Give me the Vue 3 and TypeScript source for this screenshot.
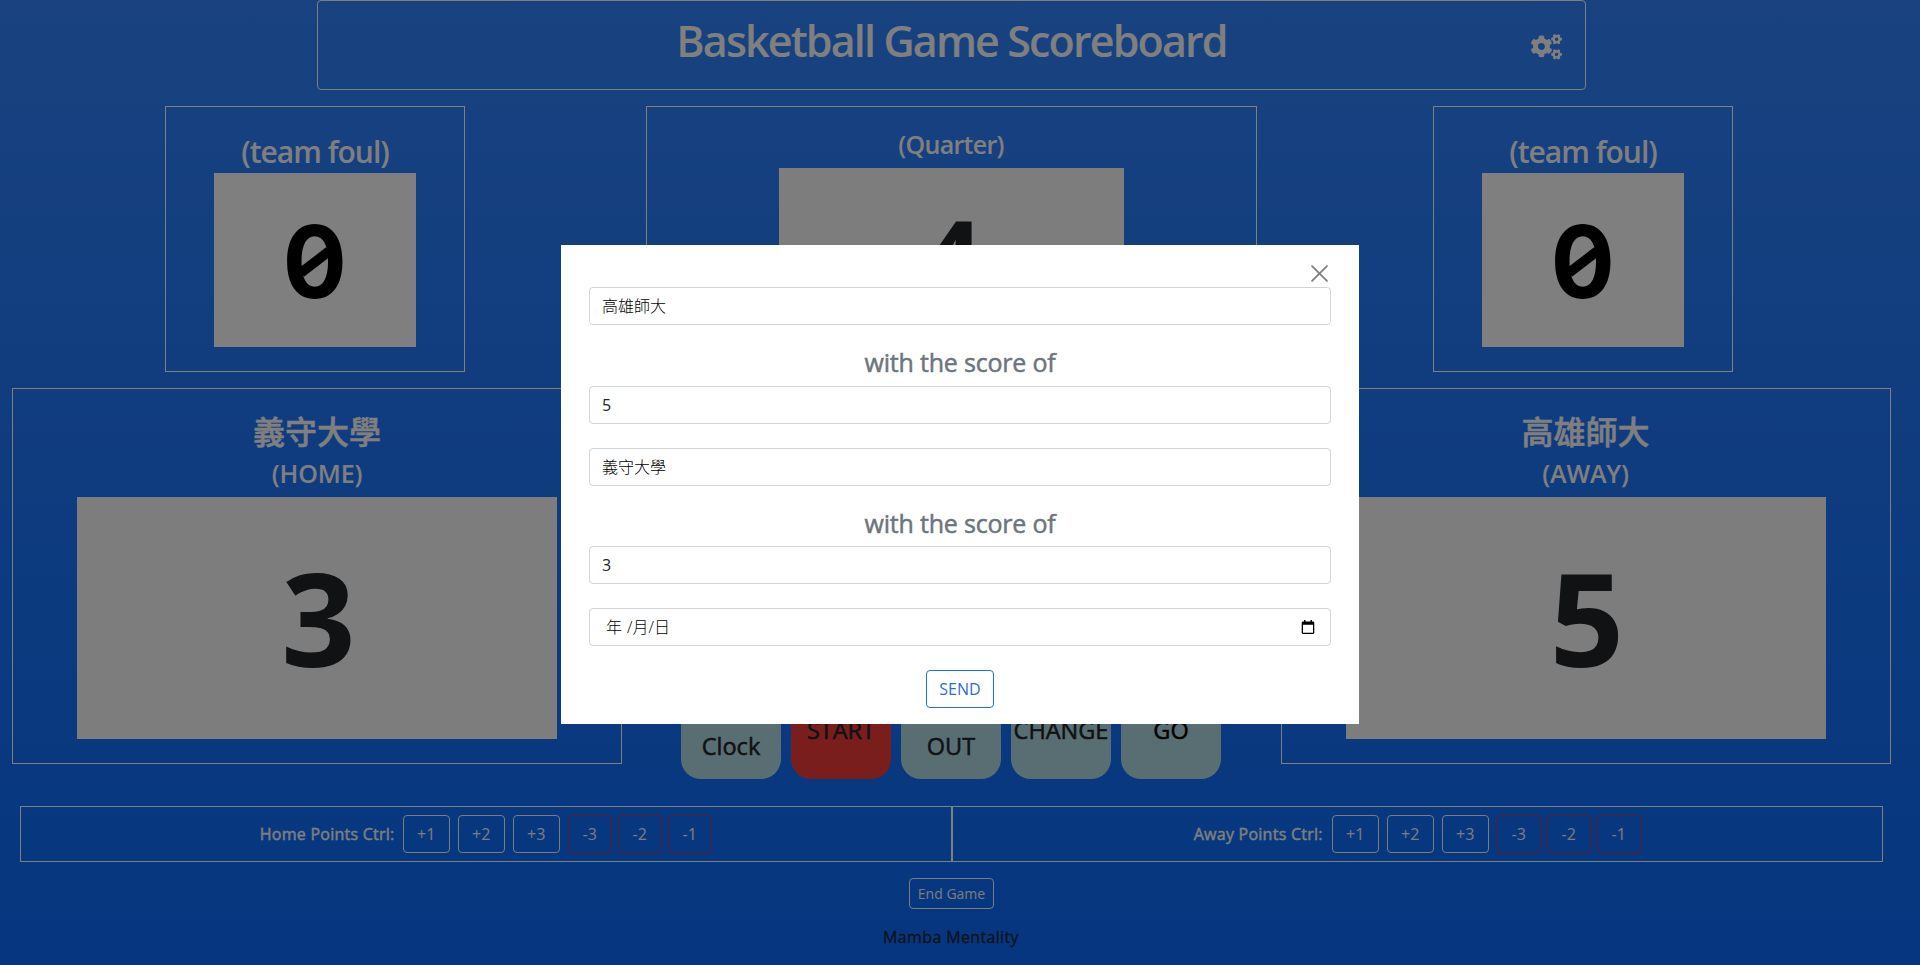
<script setup lang="ts">
import { ref } from 'vue'

interface Control { label: string; lines: string[]; tone?: string }
interface Side { name: string; points: string[]; deductions: string[] }

const awayName = ref('高雄師大')
const homeName = ref('義守大學')
const awayScore = ref('5')
const homeScore = ref('3')

const controls: Control[] = [
  { label: 'clock', lines: ['Shot', 'Clock'] },
  { label: 'start', lines: ['START'], tone: 'red' },
  { label: 'timeout', lines: ['TIME', 'OUT'] },
  { label: 'change', lines: ['CHANGE'] },
  { label: 'go', lines: ['GO'], tone: 'go' },
]
const sides: Side[] = [
  { name: 'Home', points: ['+1', '+2', '+3'], deductions: ['-3', '-2', '-1'] },
  { name: 'Away', points: ['+1', '+2', '+3'], deductions: ['-3', '-2', '-1'] },
]
</script>

<template>
  <div class="page">
    <header class="header">
      <h1>Basketball Game Scoreboard</h1>
      <svg class="cogs" viewBox="0 0 640 512" fill="#fff">
        <path fill-rule="evenodd" d="M512.1 191l-8.2 14.3c-3 5.300-9.400 7.500-15.100 5.400-11.800-4.400-22.600-10.700-32.100-18.600-4.600-3.800-5.800-10.500-2.800-15.700l8.200-14.300c-6.900-8-12.300-17.300-15.900-27.400h-16.500c-6 0-11.200-4.300-12.200-10.300-2-12-2.100-24.600 0-37.100 1-6 6.200-10.400 12.200-10.400h16.500c3.600-10.100 9-19.400 15.900-27.400l-8.200-14.300c-3-5.200-1.900-11.900 2.800-15.700 9.500-7.900 20.400-14.200 32.100-18.600 5.700-2.100 12.100.1 15.100 5.400l8.200 14.300c10.500-1.900 21.200-1.900 31.700 0L552 6.300c3-5.300 9.400-7.500 15.100-5.400 11.800 4.400 22.600 10.700 32.100 18.600 4.600 3.800 5.800 10.500 2.800 15.700l-8.200 14.300c6.900 8 12.300 17.300 15.900 27.400h16.500c6 0 11.200 4.300 12.200 10.300 2 12 2.100 24.600 0 37.100-1 6-6.200 10.400-12.200 10.400h-16.500c-3.600 10.100-9 19.400-15.900 27.400l8.200 14.300c3 5.200 1.900 11.900-2.800 15.700-9.500 7.900-20.400 14.200-32.100 18.600-5.700 2.100-12.100-.1-15.100-5.400l-8.200-14.300c-10.400 1.900-21.200 1.900-31.700 0zM501.600 132.200c38.500 29.600 82.400-14.300 52.800-52.800-38.500-29.700-82.400 14.300-52.800 52.800zM386.300 286.100l33.700 16.800c10.100 5.800 14.500 18.100 10.500 29.100-8.900 24.200-26.400 46.400-42.600 65.800-7.400 8.900-20.200 11.100-30.300 5.300l-29.100-16.800c-16 13.700-34.600 24.600-54.900 31.700v33.600c0 11.600-8.300 21.600-19.700 23.600-24.600 4.200-50.400 4.400-75.900 0-11.500-2-20-11.900-20-23.600V418c-20.300-7.200-38.900-18-54.900-31.700L74 403c-10 5.800-22.900 3.600-30.300-5.300-16.200-19.400-33.300-41.600-42.200-65.700-4-10.900.4-23.200 10.500-29.100l33.300-16.800c-3.900-20.900-3.900-42.400 0-63.400L12 205.800c-10.100-5.800-14.600-18.100-10.500-29 8.900-24.200 26-46.400 42.200-65.800 7.400-8.900 20.200-11.100 30.300-5.300l29.100 16.800c16-13.700 34.600-24.600 54.900-31.700V57.100c0-11.500 8.200-21.500 19.600-23.500 24.600-4.200 50.500-4.400 76-.1 11.500 2 20 11.900 20 23.600v33.600c20.300 7.200 38.900 18 54.900 31.700l29.100-16.800c10-5.800 22.900-3.600 30.300 5.300 16.200 19.400 33.200 41.600 42.100 65.800 4 10.900.1 23.200-10 29.100l-33.700 16.800c3.900 21 3.900 42.500 0 63.500zM268.700 307.200c59.200-77-28.700-164.900-105.700-105.700-59.200 77 28.700 164.900 105.700 105.700zM512.100 504l-8.200 14.300c-3 5.300-9.400 7.500-15.100 5.400-11.800-4.400-22.600-10.700-32.100-18.600-4.600-3.800-5.800-10.500-2.800-15.700l8.200-14.300c-6.900-8-12.300-17.300-15.900-27.400h-16.500c-6 0-11.200-4.300-12.200-10.300-2-12-2.100-24.600 0-37.100 1-6 6.200-10.400 12.200-10.400h16.500c3.600-10.100 9-19.400 15.900-27.400l-8.200-14.300c-3-5.200-1.900-11.900 2.800-15.700 9.500-7.900 20.400-14.200 32.100-18.600 5.700-2.100 12.100.1 15.100 5.400l8.200 14.300c10.500-1.900 21.200-1.900 31.700 0l8.200-14.300c3-5.300 9.400-7.500 15.100-5.400 11.800 4.400 22.600 10.700 32.100 18.600 4.600 3.800 5.800 10.500 2.800 15.700l-8.200 14.300c6.900 8 12.300 17.300 15.900 27.400h16.500c6 0 11.200 4.300 12.200 10.300 2 12 2.100 24.600 0 37.100-1 6-6.200 10.400-12.200 10.400h-16.500c-3.600 10.100-9 19.400-15.900 27.400l8.200 14.300c3 5.200 1.900 11.900-2.800 15.700-9.500 7.900-20.400 14.200-32.100 18.600-5.700 2.100-12.100-.1-15.100-5.400l-8.200-14.300c-10.400 1.900-21.200 1.900-31.700 0zM501.600 445.200c38.500 29.600 82.400-14.300 52.800-52.800-38.500-29.700-82.400 14.300-52.800 52.800z" />
      </svg>
    </header>

    <main class="board">
      <section class="column">
        <div class="foul">
          <h2>(team foul)</h2>
          <div class="foul-count"><span class="zero">0</span></div>
        </div>
        <div class="team">
          <h2 lang="zh-TW">{{ homeName }}</h2>
          <h3>(HOME)</h3>
          <div class="score">{{ homeScore }}</div>
        </div>
      </section>
      <section class="column middle">
        <div class="quarter">
          <h3>(Quarter)</h3>
          <div class="quarter-count">4</div>
        </div>
        <div class="controls">
          <button v-for="c in controls" :key="c.label" :class="['control', c.tone]">
            <span v-for="line in c.lines" :key="line" :class="line.toLowerCase()">{{ line }}</span>
          </button>
        </div>
      </section>
      <section class="column right">
        <div class="foul">
          <h2>(team foul)</h2>
          <div class="foul-count"><span class="zero">0</span></div>
        </div>
        <div class="team">
          <h2 lang="zh-TW">{{ awayName }}</h2>
          <h3>(AWAY)</h3>
          <div class="score">{{ awayScore }}</div>
        </div>
      </section>
    </main>

    <div class="points">
      <div v-for="side in sides" :key="side.name" class="points-side">
        <span :class="['points-label', side.name.toLowerCase()]">{{ side.name }} Points Ctrl:</span>
        <button v-for="p in side.points" :key="p" class="plus">{{ p }}</button>
        <button v-for="d in side.deductions" :key="d" class="minus">{{ d }}</button>
      </div>
    </div>
    <button class="end">End Game</button>
    <footer>Mamba Mentality</footer>

    <div class="backdrop">
      <form class="modal" @submit.prevent>
        <button type="button" class="close" aria-label="Close">
          <svg viewBox="0 0 16 16" stroke="#808080" stroke-width="1.7" stroke-linecap="round">
            <path d="M1 1l14 14M15 1L1 15" />
          </svg>
        </button>
        <input v-model="awayName" class="field name" />
        <p class="caption">with the score of</p>
        <input v-model="awayScore" class="field" />
        <input v-model="homeName" class="field name spaced" />
        <p class="caption">with the score of</p>
        <input v-model="homeScore" class="field" />
        <div class="field spaced date">
          <span class="date-parts"><span>年</span><span class="slash">/</span><span>月</span><span>/</span><span>日</span></span>
          <svg viewBox="0 0 14 15">
            <path fill="#000" fill-rule="evenodd" d="M3 0h1.500v1.500h5V0H11v1.500h1q1.300 0 1.300 1.300v9.900q0 1.300-1.300 1.300H2Q.7 14 .7 12.700V2.800Q.7 1.500 2 1.500h1zM2 4.800v7.900h10V4.800z" />
          </svg>
        </div>
        <button class="send">SEND</button>
      </form>
    </div>
  </div>
</template>

<style>
body { margin: 0; overflow: hidden; }
</style>

<style scoped>
* { box-sizing: border-box; }
.page {
  height: 965px;
  overflow: hidden;
  background: linear-gradient(#3284ff, #0a6cff);
  font-family: "Open Sans", "Noto Sans", "Noto Sans CJK TC", sans-serif;
  font-size: 16px;
  color: #fff;
}
button { font: inherit; padding: 0; background: none; }
h1, h2, h3, p { margin: 0; font-weight: 600; }
.header {
  width: 1269px;
  height: 90px;
  margin-left: 317px;
  border: 1px solid #fff;
  border-radius: 4px;
  display: grid;
  grid-template-columns: 1fr auto 1fr;
}
h1 {
  grid-column: 2;
  font-size: 43px;
  line-height: 80px;
  font-weight: 600;
  letter-spacing: -1.85px;
  white-space: nowrap;
}
.cogs { width: 31px; height: 25px; justify-self: end; margin: 33px 23px 0 0; overflow: visible; }
.board {
  width: 1902px;
  margin-top: 16px;
  display: grid;
  grid-template-columns: 634px 634px 635px;
}
.column { display: flex; flex-direction: column; align-items: center; }
.foul, .team, .quarter {
  border: 1px solid #fff;
  display: flex;
  flex-direction: column;
  align-items: center;
}
.foul { width: 300px; height: 266px; margin-left: -4px; }
.right .foul { margin-left: -5px; }
.foul h2 { font-size: 30px; line-height: 36px; letter-spacing: -1px; margin-top: 27px; margin-bottom: 3px; }
.foul-count {
  width: 202px;
  height: 174px;
  background: #fff;
  color: #000;
  font: 700 100px/177px Inter, sans-serif;
  text-align: center;
}
.zero { position: relative; display: inline-block; transform: scaleX(0.95); }
.zero::after {
  content: "";
  position: absolute;
  left: calc(50% - 18px);
  top: calc(50% - 5px);
  width: 36px;
  height: 10px;
  background: #000;
  transform: rotate(-36deg);
}
.team { width: 610px; height: 376px; margin-top: 16px; }
.team h2 { font-family: "Noto Sans CJK TC", sans-serif; font-weight: 500; font-size: 32px; line-height: 38px; margin-top: 22px; -webkit-text-stroke: 0.5px; }
.team h3 { font-size: 25px; line-height: 30px; margin-top: 9px; margin-bottom: 9px; font-weight: 600; letter-spacing: -0.1px; }
.score {
  width: 480px;
  height: 242px;
  background: #fbfbfb;
  color: #212529;
  font-size: 130px;
  line-height: 240px;
  font-weight: 700;
  text-align: center;
  padding-left: 3px;
}
.middle { justify-content: space-between; height: 673px; }
.quarter { width: 611px; height: 266px; }
.quarter h3 { font-size: 25px; line-height: 30px; margin: 22px 0 9px; letter-spacing: -0.7px; }
.quarter-count {
  width: 345px;
  height: 174px;
  background: #fbfbfb;
  color: #212529;
  font-size: 112px;
  line-height: 180px;
  font-weight: 700;
  text-align: center;
}
.controls { display: flex; gap: 10px; }
.control {
  width: 100px;
  height: 100px;
  border: 0;
  border-radius: 20px;
  background: #b2dce6;
  color: #212529;
  display: flex;
  flex-direction: column;
  align-items: center;
  justify-content: center;
  font-size: 23.5px;
  line-height: 32px;
  padding-top: 2px;
  -webkit-text-stroke: 0.5px;
  white-space: nowrap;
}
.controls .red { background: #f43b3b; }
.controls .go { color: #000; }
.points { display: flex; width: 1863px; margin: 27px 0 0 20px; }
.points-side {
  flex: 1;
  height: 56px;
  border: 1px solid #fff;
  display: flex;
  align-items: center;
  justify-content: center;
  color: #fff;
}
.points-label { margin-right: 7px; white-space: nowrap; letter-spacing: 0.25px; -webkit-text-stroke: 0.4px; }
.points-label.home { width: 136px; }
.points-label.away { width: 131px; }
.plus, .minus { height: 38px; border-radius: 4px; color: #f8f9fa; }
.plus { width: 47px; border: 1px solid #f8f9fa; margin-right: 8px; }
.minus { width: 44px; border: 1px solid #b43a5a; margin-right: 6px; }
.minus:last-child { margin-right: 0; }
.end {
  display: block;
  width: 85px;
  height: 31px;
  margin: 16px 0 0 909px;
  border: 1px solid #f8f9fa;
  border-radius: 4px;
  color: #f8f9fa;
  font-size: 14px;
  line-height: 27px;
  white-space: nowrap;
}
footer { width: 1902px; margin-top: 16px; line-height: 24px; text-align: center; color: #212529; letter-spacing: 0.35px; -webkit-text-stroke: 0.3px; }
.backdrop {
  position: fixed;
  inset: 0;
  background: rgba(0, 0, 0, 0.5);
}
.modal {
  width: 798px;
  height: 479px;
  margin: 245px auto 0;
  padding: 20px 28px 16px;
  background: #fff;
  color: #212529;
  display: flex;
  flex-direction: column;
  align-items: center;
}
.close { align-self: flex-end; width: 17px; height: 17px; border: 0; margin: 0 3px 5px 0; }
.close svg { display: block; width: 17px; height: 17px; }
.field {
  width: 742px;
  height: 38px;
  flex: none;
  border: 1px solid #ced4da;
  border-radius: 4px;
  padding: 0 12px;
  font: 400 16px/36px "Open Sans", "Noto Sans CJK TC", sans-serif;
  color: #212529;
  outline: none;
  background: #fff;
}
.name { font-weight: 300; color: #000; padding-bottom: 2px; }
.spaced { margin-top: 24px; }
.caption { height: 61px; padding-top: 22px; line-height: 30px; font-size: 25px; font-weight: 400; color: #6c757d; letter-spacing: -0.2px; -webkit-text-stroke: 0.5px; }
.modal .caption:nth-of-type(2) { height: 60px; }
.date { display: flex; align-items: center; justify-content: space-between; padding: 0 15px 0 16px; font-weight: 300; color: #000; }
.date-parts { display: flex; }
.slash { margin-left: 5px; }
.date svg { width: 14px; height: 15px; }
.send {
  width: 68px;
  height: 38px;
  margin-top: 24px;
  border: 1px solid #1f6fdc;
  border-radius: 4px;
  color: #2b6bdc;
  flex: none;
}
</style>
